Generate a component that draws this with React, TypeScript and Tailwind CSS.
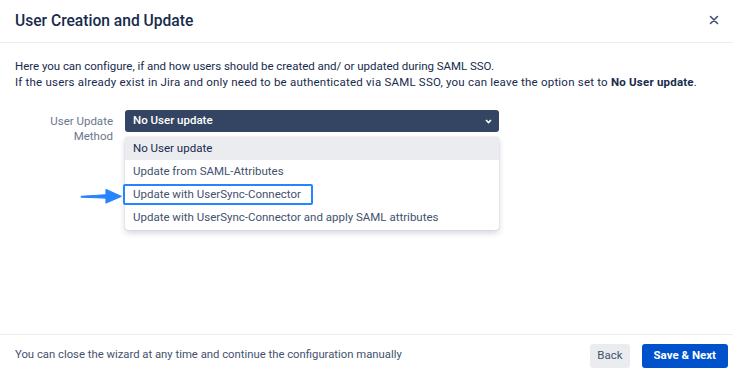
import React from 'react';

const options = [
  'No User update',
  'Update from SAML-Attributes',
  'Update with UserSync-Connector',
  'Update with UserSync-Connector and apply SAML attributes',
];

const App: React.FC = () => {
  return (
    <div
      className="w-[733px] h-[372px] bg-white flex flex-col text-[#172b4d] overflow-hidden"
      style={{ fontFamily: 'Roboto, "Noto Sans", sans-serif' }}
    >
      {/* Header */}
      <div className="h-[43px] flex items-center justify-between pl-[15px] pr-[14px] border-b border-[#ebecf0] shrink-0">
        <h2 className="text-[15.6px] font-medium pt-[2px]">User Creation and Update</h2>
        <button className="text-[#42526e] -mt-[2px]">
          <svg width="10" height="10" viewBox="0 0 10 10">
            <path d="M1.5 1.5 L8.5 8.5 M8.5 1.5 L1.5 8.5" stroke="currentColor" strokeWidth="1.6" strokeLinecap="round" />
          </svg>
        </button>
      </div>

      {/* Content */}
      <div className="flex-1 px-[15px] pt-[15px]">
        <p className="text-[11.5px] leading-[16px] text-[#172b4d]">
          <span className="tracking-[-0.03px]">
            Here you can configure, if and how users should be created and/ or updated during SAML SSO.
          </span>
          <br />
          <span className="tracking-[0.21px]">
            If the users already exist in Jira and only need to be authenticated via SAML SSO, you can leave the option set to{' '}
            <span className="font-bold">No User update</span>.
          </span>
        </p>

        <div className="flex mt-[20px]">
          <label className="w-[98px] text-right text-[11.5px] leading-[15px] text-[#6b778c] pt-[4px] shrink-0">
            User Update
            <br />
            Method
          </label>
          <div className="ml-[12px] w-[374px] relative">
            <div className="h-[22px] bg-[#344563] rounded-[3px] flex items-center justify-between pl-[8px] pr-[7px] text-white text-[11.5px] font-medium">
              <span>No User update</span>
              <svg width="7" height="5" viewBox="0 0 7 5">
                <path d="M1 1 L3.5 3.5 L6 1" stroke="white" strokeWidth="1.6" fill="none" />
              </svg>
            </div>
            <div className="mt-[5px] bg-white rounded-[3px] shadow-[0_3px_6px_rgba(9,30,66,0.18),0_0_1px_rgba(9,30,66,0.3)] relative">
              {options.map((o, i) => (
                <div
                  key={o}
                  className={`h-[23px] flex items-center px-[8px] text-[11.5px] ${
                    i === 0 ? 'bg-[#ebecf0] text-[#172b4d]' : 'text-[#42526e]'
                  }`}
                >
                  {i === 2 ? (
                    <span className="-ml-[10px] pl-[8px] pr-[10px] h-[21px] flex items-center border-2 border-[#2684ff] rounded-[2px]">
                      {o}
                    </span>
                  ) : (
                    o
                  )}
                </div>
              ))}
              <div className="h-[1px]" />
              {/* arrow pointing to highlighted option */}
              <svg className="absolute left-[-46px] top-[51px]" width="44" height="16" viewBox="0 0 44 16">
                <path d="M2 8.3 L29 6.6 L29 10.2 L2 9.2 Z" fill="#2684ff" stroke="#2684ff" strokeWidth="1" strokeLinejoin="round" />
                <path d="M27 1.5 L42 8.4 L27 15 Z" fill="#2684ff" stroke="#2684ff" strokeWidth="1.2" strokeLinejoin="round" />
              </svg>
            </div>
          </div>
        </div>
      </div>

      {/* Footer */}
      <div className="h-[38px] border-t border-[#ebecf0] flex items-center justify-between pl-[15px] pr-[5px] pt-[4px] shrink-0">
        <span className="text-[11.3px] text-[#42526e]">
          You can close the wizard at any time and continue the configuration manually
        </span>
        <div className="flex gap-[12px]">
          <button className="h-[24px] px-[7px] rounded-[3px] bg-[#ebecf0] text-[#42526e] text-[11.5px]">Back</button>
          <button className="h-[24px] px-[12px] rounded-[3px] bg-[#0052cc] text-white text-[11.5px] font-bold">
            Save &amp; Next
          </button>
        </div>
      </div>
    </div>
  );
};

export default App;
